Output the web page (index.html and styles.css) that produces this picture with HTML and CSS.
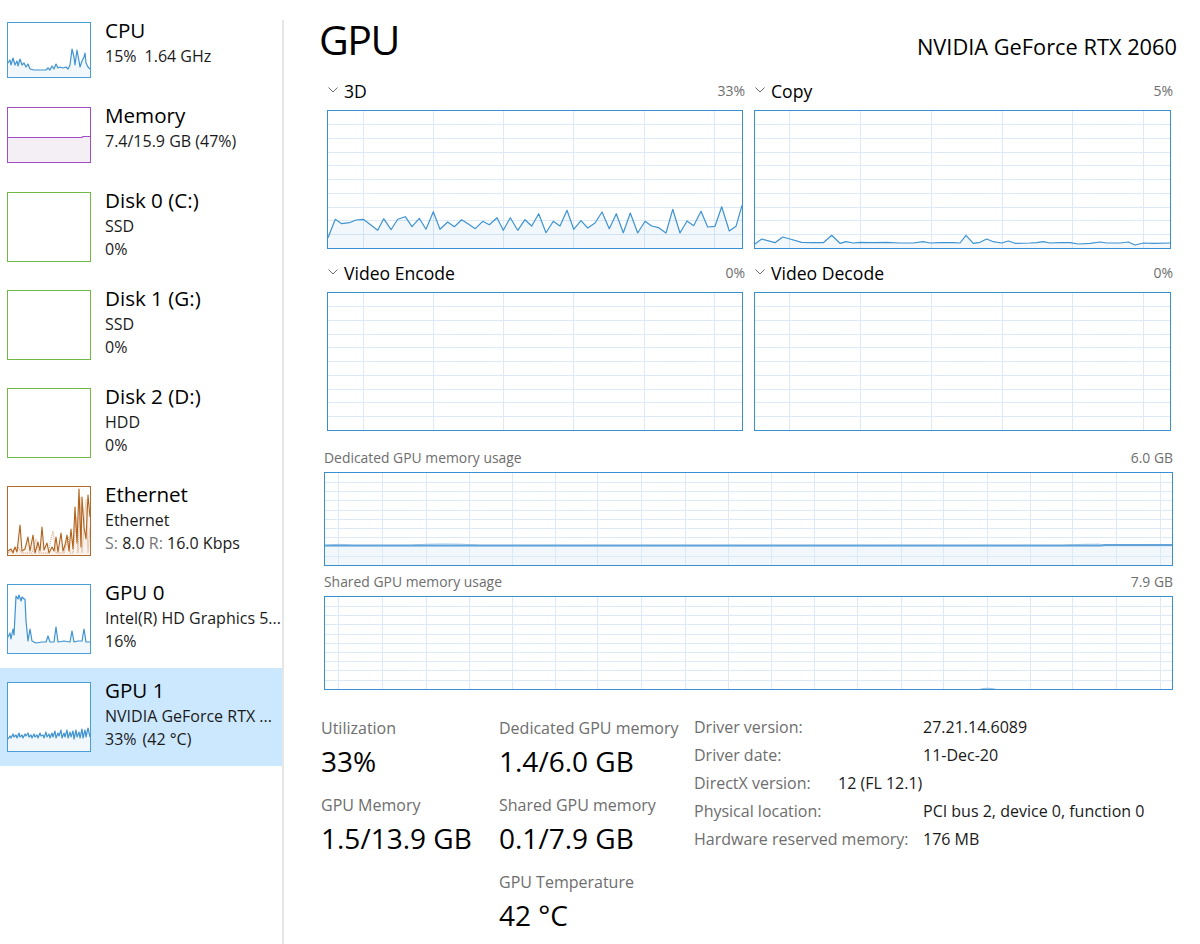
FILE: index.html
```html
<!DOCTYPE html>
<html lang="en">
<head>
<meta charset="utf-8">
<title>Task Manager - GPU</title>
<link rel="stylesheet" href="styles.css">
</head>
<body>
<div class="app">
  <nav class="sidebar">
    <div class="item small">
      <div class="thumb cpu">
        <svg viewBox="0 0 82 54" preserveAspectRatio="none">
          <path class="fill-blue" d="M0 54L0 40 2 37 3 42 5 35 7 42 9 38 10 43 12 36 14 42 16 40 18 44 20 41 22 46 26 47 32 47 38 47 40 45 42 47 44 43 46 46 48 41 50 45 52 44 55 45 58 44 60 46 62 42 64 26 66 34 67 42 69 27 71 38 72 44 74 38 76 34 77 30 78 40 80 44 82 46 82 54Z"/>
          <polyline class="line-blue" points="0,40 2,37 3,42 5,35 7,42 9,38 10,43 12,36 14,42 16,40 18,44 20,41 22,46 26,47 32,47 38,47 40,45 42,47 44,43 46,46 48,41 50,45 52,44 55,45 58,44 60,46 62,42 64,26 66,34 67,42 69,27 71,38 72,44 74,38 76,34 77,30 78,40 80,44 82,46"/>
        </svg>
      </div>
      <div class="info">
        <div class="title">CPU</div>
        <div class="sub">15%<span class="gap">1.64 GHz</span></div>
      </div>
    </div>

    <div class="item small">
      <div class="thumb mem">
        <svg viewBox="0 0 82 54" preserveAspectRatio="none">
          <path class="fill-purple" d="M0 54V29.5H74V28.5H82V54Z"/>
          <path class="line-purple" d="M0 29.5H74L75 28.5H82"/>
        </svg>
      </div>
      <div class="info">
        <div class="title">Memory</div>
        <div class="sub">7.4/15.9 GB (47%)</div>
      </div>
    </div>

    <div class="item">
      <div class="thumb disk"></div>
      <div class="info">
        <div class="title">Disk 0 (C:)</div>
        <div class="sub">SSD</div>
        <div class="sub">0%</div>
      </div>
    </div>

    <div class="item">
      <div class="thumb disk"></div>
      <div class="info">
        <div class="title">Disk 1 (G:)</div>
        <div class="sub">SSD</div>
        <div class="sub">0%</div>
      </div>
    </div>

    <div class="item">
      <div class="thumb disk"></div>
      <div class="info">
        <div class="title">Disk 2 (D:)</div>
        <div class="sub">HDD</div>
        <div class="sub">0%</div>
      </div>
    </div>

    <div class="item">
      <div class="thumb eth">
        <svg viewBox="0 0 82 68" preserveAspectRatio="none">
          <path class="fill-orange" d="M0 68L0 64 3 62 5 66 7 60 9 65 12 38 14 64 17 62 20 50 22 64 25 48 27 66 30 55 32 64 34 40 36 63 39 56 41 66 44 60 46 64 48 50 50 65 53 46 55 64 57 58 59 48 61 64 63 42 65 62 67 20 69 56 71 2 73 60 74 10 76 40 78 52 80 8 82 30 82 68Z"/>
          <polyline class="line-orange dotted" points="0,66 10,60 14,66 24,66 28,52 31,66 40,66 45,44 48,66 56,66 60,50 62,66 65,66 68,30 70,66 72,10 74,66 78,12 80,66 82,40"/>
          <polyline class="line-orange" points="0,64 3,62 5,66 7,60 9,65 12,38 14,64 17,62 20,50 22,64 25,48 27,66 30,55 32,64 34,40 36,63 39,56 41,66 44,60 46,64 48,50 50,65 53,46 55,64 57,58 59,48 61,64 63,42 65,62 67,20 69,56 71,2 73,60 74,10 76,40 78,52 80,8 82,30"/>
        </svg>
      </div>
      <div class="info">
        <div class="title">Ethernet</div>
        <div class="sub">Ethernet</div>
        <div class="sub"><span class="muted">S:</span> 8.0 <span class="muted">R:</span> 16.0 Kbps</div>
      </div>
    </div>

    <div class="item">
      <div class="thumb gpu">
        <svg viewBox="0 0 82 68" preserveAspectRatio="none">
          <path class="fill-blue" d="M0 68L0 52 2 48 3 54 5 44 6 50 8 11 10 14 11 10 13 16 14 12 16 14 17 14 18 36 20 56 22 44 24 56 28 58 34 57 38 57 40 51 42 57 46 57 48 42 50 57 56 56 62 57 64 46 66 57 70 56 74 56 76 44 78 57 82 57 82 68Z"/>
          <polyline class="line-blue" points="0,52 2,48 3,54 5,44 6,50 8,11 10,14 11,10 13,16 14,12 16,14 17,14 18,36 20,56 22,44 24,56 28,58 34,57 38,57 40,51 42,57 46,57 48,42 50,57 56,56 62,57 64,46 66,57 70,56 74,56 76,44 78,57 82,57"/>
        </svg>
      </div>
      <div class="info">
        <div class="title">GPU 0</div>
        <div class="sub">Intel(R) HD Graphics 5...</div>
        <div class="sub">16%</div>
      </div>
    </div>

    <div class="item selected">
      <div class="thumb gpu">
        <svg viewBox="0 0 82 68" preserveAspectRatio="none">
          <path class="fill-blue" d="M0 68L0 56 2 53 3 55 5 51 6 54 8 52 9 55 11 50 12 54 14 52 15 55 17 51 18 53 20 50 21 54 23 52 24 55 26 51 27 54 29 52 30 55 32 50 33 53 35 52 36 55 38 49 39 54 41 51 42 55 44 50 45 54 47 48 48 55 50 50 51 53 53 47 54 55 56 50 57 54 59 47 60 55 62 49 63 54 65 48 66 56 68 47 69 54 71 49 72 55 74 46 75 55 77 47 78 54 80 45 82 54 82 68Z"/>
          <polyline class="line-blue" points="0,56 2,53 3,55 5,51 6,54 8,52 9,55 11,50 12,54 14,52 15,55 17,51 18,53 20,50 21,54 23,52 24,55 26,51 27,54 29,52 30,55 32,50 33,53 35,52 36,55 38,49 39,54 41,51 42,55 44,50 45,54 47,48 48,55 50,50 51,53 53,47 54,55 56,50 57,54 59,47 60,55 62,49 63,54 65,48 66,56 68,47 69,54 71,49 72,55 74,46 75,55 77,47 78,54 80,45 82,54"/>
        </svg>
      </div>
      <div class="info">
        <div class="title">GPU 1</div>
        <div class="sub">NVIDIA GeForce RTX ...</div>
        <div class="sub">33%<span class="gap-s">(42 °C)</span></div>
      </div>
    </div>
  </nav>

  <div class="divider"></div>

  <main class="main">
    <header class="head">
      <h1 class="page-title">GPU</h1>
      <div class="model">NVIDIA GeForce RTX 2060</div>
    </header>

    <section class="engines">
      <div class="engine">
        <div class="eng-head">
          <svg class="chev" viewBox="0 0 10 6"><path d="M0.5 0.5L5 5 9.5 0.5"/></svg>
          <span class="eng-name">3D</span>
          <span class="eng-pct">33%</span>
        </div>
        <div class="graph">
          <svg viewBox="0 0 414 137" preserveAspectRatio="none">
            <path class="grid" d="M0 13.5H414M0 27.5H414M0 41.5H414M0 54.5H414M0 68.5H414M0 82.5H414M0 96.5H414M0 109.5H414M0 123.5H414M35.5 0V137M105.5 0V137M175.5 0V137M245.5 0V137M316.5 0V137M386.5 0V137"/>
            <path class="fill-blue" d="M0 137L0 126.7 7.3 108.3 13.7 112.7 21.3 111.7 28 109 35.3 108.3 49.7 119.3 55.7 107.7 63 118.7 69.7 108.3 77.3 105.7 84 115.7 91.3 107.3 98 118.3 105.3 100.7 112 118.3 119.7 111 126.3 115.7 133.7 108.7 140.7 113.3 147.3 117.7 154.7 110.3 161.3 113.7 169 106.7 175.3 119.3 182.3 106.7 189.7 119.3 197 108.7 203.7 115 210.7 102.7 218 121.7 225.3 110.3 232 115 239 99.3 245.7 118.3 253 109.7 259.7 117 267 112 274 101 281.3 117.7 288.3 102.7 295.3 121.7 302.3 102 309.7 122 317 110.3 323.7 115 330.7 116.7 338 122 344.7 98.3 352 122 359 110 365.7 114.7 373 100.3 379.7 116 387 115.3 393.7 95.7 401.3 120 408 115.3 414 94.3 414 137Z"/>
            <polyline class="line-blue" points="0,126.7 7.3,108.3 13.7,112.7 21.3,111.7 28,109 35.3,108.3 49.7,119.3 55.7,107.7 63,118.7 69.7,108.3 77.3,105.7 84,115.7 91.3,107.3 98,118.3 105.3,100.7 112,118.3 119.7,111 126.3,115.7 133.7,108.7 140.7,113.3 147.3,117.7 154.7,110.3 161.3,113.7 169,106.7 175.3,119.3 182.3,106.7 189.7,119.3 197,108.7 203.7,115 210.7,102.7 218,121.7 225.3,110.3 232,115 239,99.3 245.7,118.3 253,109.7 259.7,117 267,112 274,101 281.3,117.7 288.3,102.7 295.3,121.7 302.3,102 309.7,122 317,110.3 323.7,115 330.7,116.7 338,122 344.7,98.3 352,122 359,110 365.7,114.7 373,100.3 379.7,116 387,115.3 393.7,95.7 401.3,120 408,115.3 414,94.3"/>
          </svg>
        </div>
      </div>

      <div class="engine">
        <div class="eng-head">
          <svg class="chev" viewBox="0 0 10 6"><path d="M0.5 0.5L5 5 9.5 0.5"/></svg>
          <span class="eng-name">Copy</span>
          <span class="eng-pct">5%</span>
        </div>
        <div class="graph">
          <svg viewBox="0 0 415 137" preserveAspectRatio="none">
            <path class="grid" d="M0 13.5H415M0 27.5H415M0 41.5H415M0 54.5H415M0 68.5H415M0 82.5H415M0 96.5H415M0 109.5H415M0 123.5H415M34.5 0V137M105.5 0V137M176.5 0V137M247.5 0V137M317.5 0V137M388.5 0V137"/>
            <path class="fill-blue" d="M0 137L0 133 6.7 128 20 131.7 27.7 126 35 128 46.7 131.3 56.7 131.7 68.3 131.7 76.7 124.3 85 132.3 91 130.7 98.3 132 105 131.3 118.3 131.7 131.7 131.3 145 132 158.3 132 168.3 130.7 175 132 185 131.7 198.3 131.7 205 132 211 124.3 218.3 132.3 225 131.3 231.7 128 238.3 130.7 246.7 132 253.3 130 260 132.3 275 132 281.7 131.7 288.3 130.7 295 132 305 131.7 315 131.7 323.3 133 335 132.3 345 131 351.7 132 365 132 373.3 131 380 134 388.3 132 398.3 132.3 415 132 415 137Z"/>
            <polyline class="line-blue" points="0,133 6.7,128 20,131.7 27.7,126 35,128 46.7,131.3 56.7,131.7 68.3,131.7 76.7,124.3 85,132.3 91,130.7 98.3,132 105,131.3 118.3,131.7 131.7,131.3 145,132 158.3,132 168.3,130.7 175,132 185,131.7 198.3,131.7 205,132 211,124.3 218.3,132.3 225,131.3 231.7,128 238.3,130.7 246.7,132 253.3,130 260,132.3 275,132 281.7,131.7 288.3,130.7 295,132 305,131.7 315,131.7 323.3,133 335,132.3 345,131 351.7,132 365,132 373.3,131 380,134 388.3,132 398.3,132.3 415,132"/>
          </svg>
        </div>
      </div>

      <div class="engine">
        <div class="eng-head">
          <svg class="chev" viewBox="0 0 10 6"><path d="M0.5 0.5L5 5 9.5 0.5"/></svg>
          <span class="eng-name">Video Encode</span>
          <span class="eng-pct">0%</span>
        </div>
        <div class="graph">
          <svg viewBox="0 0 414 137" preserveAspectRatio="none">
            <path class="grid" d="M0 13.5H414M0 27.5H414M0 41.5H414M0 54.5H414M0 68.5H414M0 82.5H414M0 96.5H414M0 109.5H414M0 123.5H414M35.5 0V137M105.5 0V137M175.5 0V137M245.5 0V137M316.5 0V137M386.5 0V137"/>
          </svg>
        </div>
      </div>

      <div class="engine">
        <div class="eng-head">
          <svg class="chev" viewBox="0 0 10 6"><path d="M0.5 0.5L5 5 9.5 0.5"/></svg>
          <span class="eng-name">Video Decode</span>
          <span class="eng-pct">0%</span>
        </div>
        <div class="graph">
          <svg viewBox="0 0 415 137" preserveAspectRatio="none">
            <path class="grid" d="M0 13.5H415M0 27.5H415M0 41.5H415M0 54.5H415M0 68.5H415M0 82.5H415M0 96.5H415M0 109.5H415M0 123.5H415M34.5 0V137M105.5 0V137M176.5 0V137M247.5 0V137M317.5 0V137M388.5 0V137"/>
          </svg>
        </div>
      </div>
    </section>

    <section class="memgraphs">
      <div class="mem-head"><span>Dedicated GPU memory usage</span><span>6.0 GB</span></div>
      <div class="graph mem-graph">
        <svg viewBox="0 0 847 92" preserveAspectRatio="none">
          <path class="fill-blue" d="M0 92V72.5H847V92Z"/>
          <path class="grid" d="M0 9.5H847M0 18.5H847M0 27.5H847M0 37.5H847M0 46.5H847M0 55.5H847M0 64.5H847M0 73.5H847M0 83.5H847M13.5 0V92M57.5 0V92M101.5 0V92M144.5 0V92M187.5 0V92M230.5 0V92M272.5 0V92M316.5 0V92M360.5 0V92M403.5 0V92M446.5 0V92M489.5 0V92M532.5 0V92M576.5 0V92M618.5 0V92M662.5 0V92M705.5 0V92M747.5 0V92M791.5 0V92M835.5 0V92"/>
          <path class="faint" d="M4 72Q14 70.5 26 72M88 72Q118 69.5 152 72M740 72Q760 71 775 71"/>
          <path class="mem-line" d="M0 72.5H775L780 72H847"/>
        </svg>
      </div>
      <div class="mem-head second"><span>Shared GPU memory usage</span><span>7.9 GB</span></div>
      <div class="graph mem-graph">
        <svg viewBox="0 0 847 92" preserveAspectRatio="none">
          <path class="grid" d="M0 9.5H847M0 18.5H847M0 27.5H847M0 37.5H847M0 46.5H847M0 55.5H847M0 64.5H847M0 73.5H847M0 83.5H847M13.5 0V92M57.5 0V92M101.5 0V92M144.5 0V92M187.5 0V92M230.5 0V92M272.5 0V92M316.5 0V92M360.5 0V92M403.5 0V92M446.5 0V92M489.5 0V92M532.5 0V92M576.5 0V92M618.5 0V92M662.5 0V92M705.5 0V92M747.5 0V92M791.5 0V92M835.5 0V92"/>
          <path class="bump" d="M654 92Q662 89.5 672 92Z"/>
        </svg>
      </div>
    </section>

    <section class="stats">
      <div class="stat-col c1">
        <div class="stat">
          <div class="stat-label">Utilization</div>
          <div class="stat-value">33%</div>
        </div>
        <div class="stat">
          <div class="stat-label">GPU Memory</div>
          <div class="stat-value">1.5/13.9 GB</div>
        </div>
      </div>
      <div class="stat-col c2">
        <div class="stat">
          <div class="stat-label">Dedicated GPU memory</div>
          <div class="stat-value">1.4/6.0 GB</div>
        </div>
        <div class="stat">
          <div class="stat-label">Shared GPU memory</div>
          <div class="stat-value">0.1/7.9 GB</div>
        </div>
        <div class="stat">
          <div class="stat-label">GPU Temperature</div>
          <div class="stat-value">42 °C</div>
        </div>
      </div>
      <div class="props">
        <div class="prop"><span class="prop-label">Driver version:</span><span class="prop-value">27.21.14.6089</span></div>
        <div class="prop"><span class="prop-label">Driver date:</span><span class="prop-value">11-Dec-20</span></div>
        <div class="prop dx"><span class="prop-label">DirectX version:</span><span class="prop-value">12 (FL 12.1)</span></div>
        <div class="prop"><span class="prop-label">Physical location:</span><span class="prop-value">PCI bus 2, device 0, function 0</span></div>
        <div class="prop"><span class="prop-label">Hardware reserved memory:</span><span class="prop-value">176 MB</span></div>
      </div>
    </section>
  </main>
</div>
</body>
</html>
```

FILE: styles.css
```css
html, body {
  margin: 0;
  padding: 0;
  background: #ffffff;
}

body {
  font-family: "Open Sans", "Noto Sans", sans-serif;
  color: #000000;
}

.app {
  display: flex;
  height: 944px;
  overflow: hidden;
}

/* ---------- sidebar ---------- */
.sidebar {
  width: 282px;
  flex: none;
  padding-top: 8px;
}

.item {
  display: flex;
  height: 98px;
  box-sizing: border-box;
  padding: 9px 0 0 7px;
}

.item.small {
  height: 85px;
}

.item.selected {
  background: #cce8ff;
}

.thumb {
  flex: none;
  width: 84px;
  height: 70px;
  box-sizing: border-box;
  margin-top: 5px;
  border: 1px solid #4a9ed8;
  background: #ffffff;
}

.item.small .thumb {
  height: 56px;
}

.thumb svg {
  display: block;
  width: 100%;
  height: 100%;
}

.thumb.mem { border-color: #a34cc4; }
.thumb.disk { border-color: #72b845; }
.thumb.eth { border-color: #b46a2a; }

.info {
  margin-left: 14px;
  min-width: 0;
  white-space: nowrap;
}

.title {
  font-size: 20.6px;
  line-height: 26px;
  margin-bottom: 2px;
}

.sub {
  font-size: 16px;
  line-height: 23px;
  color: #1a1a1a;
}

.gap { margin-left: 8px; }
.gap-s { margin-left: 6px; }
.muted { color: #767676; }

.divider {
  flex: none;
  width: 2px;
  margin-top: 20px;
  background: #e6e6e6;
}

/* ---------- graph drawing ---------- */
.fill-blue { fill: rgba(17, 125, 187, 0.06); stroke: none; }
.line-blue { fill: none; stroke: #3f93d1; stroke-width: 1.2; stroke-linejoin: round; }
.fill-purple { fill: #f3eff4; stroke: none; }
.line-purple { fill: none; stroke: #a34cc4; stroke-width: 1.2; }
.fill-orange { fill: rgba(167, 79, 1, 0.07); stroke: none; }
.line-orange { fill: none; stroke: #b0621c; stroke-width: 1.1; stroke-linejoin: round; }
.line-orange.dotted { stroke: #d7a07a; stroke-dasharray: 1 1; }
.grid { fill: none; stroke: #dbeaf6; stroke-width: 1; }
.faint { fill: none; stroke: #bcd8ee; stroke-width: 1; }
.mem-line { fill: none; stroke: #62a4da; stroke-width: 1.8; }
.bump { fill: #9cc6e8; stroke: none; }

/* ---------- main ---------- */
.main {
  flex: 1;
  min-width: 0;
  padding: 14px 23px 0 36px;
}

.head {
  display: flex;
  justify-content: space-between;
  align-items: baseline;
  height: 50px;
}

.page-title {
  margin: 0 0 0 -1px;
  font-size: 41px;
  line-height: 50px;
  font-weight: 400;
  letter-spacing: -1.5px;
}

.model {
  font-size: 21.8px;
}

.engines {
  display: grid;
  grid-template-columns: 416px 417px;
  column-gap: 11px;
  row-gap: 11px;
  margin: 14px 0 0 7px;
}

.eng-head {
  display: flex;
  height: 26px;
  margin: 0 -2px 6px 0;
  line-height: 26px;
}

.chev {
  flex: none;
  width: 10px;
  height: 6px;
  margin: 9px 6px 0 1px;
}

.chev path {
  fill: none;
  stroke: #6b6b6b;
  stroke-width: 1;
}

.eng-name {
  font-size: 17.6px;
  flex: 1;
}

.eng-pct {
  font-size: 14px;
  color: #6e6e6e;
}

.graph {
  height: 139px;
  box-sizing: border-box;
  border: 1px solid #3a8fd1;
  background: #ffffff;
}

.graph svg {
  display: block;
  width: 100%;
  height: 100%;
}

.memgraphs {
  margin: 17px 0 0 4px;
  width: 849px;
}

.mem-head {
  display: flex;
  justify-content: space-between;
  font-size: 13.9px;
  line-height: 20px;
  color: #6e6e6e;
  margin-bottom: 4px;
}

.mem-head.second {
  margin-top: 6px;
}

.graph.mem-graph {
  height: 94px;
}

/* ---------- stats ---------- */
.stats {
  display: flex;
  margin: 23px 0 0 1px;
}

.stat-col {
  flex: none;
  padding-top: 3.5px;
}

.stat-col.c1 { width: 178px; }
.stat-col.c2 { width: 195px; }

.stat-label {
  font-size: 16px;
  line-height: 22px;
  color: #6e6e6e;
  margin-bottom: 3px;
  white-space: nowrap;
}

.stat-value {
  font-size: 28px;
  line-height: 38px;
  margin-bottom: 14px;
  white-space: nowrap;
}

.props {
  flex: 1;
}

.prop {
  display: flex;
  font-size: 16px;
  line-height: 28px;
  white-space: nowrap;
}

.prop-label {
  flex: none;
  width: 229px;
  color: #6e6e6e;
}

.prop.dx .prop-label {
  width: 144px;
}

.prop-value {
  color: #1a1a1a;
}
```
